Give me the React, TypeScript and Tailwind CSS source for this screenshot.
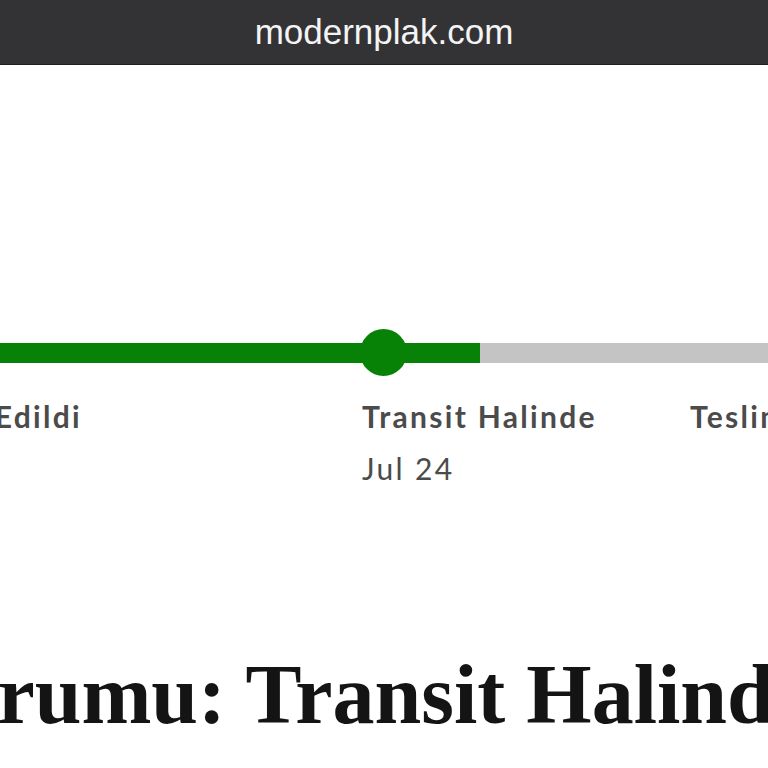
const labelFont = { fontFamily: "Lato, 'Open Sans', sans-serif" };

export default function App() {
  return (
    <div className="h-[768px] w-[768px] overflow-hidden bg-white">
      {/* Browser address bar */}
      <header className="flex h-[65px] items-center justify-center border-b border-[#1f1f21] bg-[#333335]">
        <span
          className="pb-[2px] text-[35px] leading-none text-[#f4f4f4]"
          style={{ fontFamily: "'Liberation Sans', Arial, sans-serif" }}
        >
          modernplak.com
        </span>
      </header>

      {/* Tracking timeline */}
      <section className="pt-[264px]">
        <div className="relative flex h-[47px] items-center">
          <div className="flex h-[20px] w-full">
            <div className="w-[480px] bg-[#078207]" />
            <div className="flex-1 bg-[#c4c4c4]" />
          </div>
          <div className="absolute left-[360px] top-0 h-[47px] w-[47px] rounded-full bg-[#078207]" />
        </div>

        <div
          className="mt-[25px] flex text-[30px] font-bold leading-none tracking-[2.3px] text-[#4b4b4b]"
          style={labelFont}
        >
          <div className="flex w-[82px] shrink-0 justify-end whitespace-nowrap">Sipariş Edildi</div>
          <div className="ml-[280px] w-[328px] shrink-0 whitespace-nowrap">
            <div>Transit Halinde</div>
            <div className="mt-[22px] font-normal">Jul 24</div>
          </div>
          <div className="whitespace-nowrap">Teslim Edildi</div>
        </div>
      </section>

      {/* Status heading */}
      <h1
        className="mt-[170px] whitespace-nowrap text-[84px] font-bold leading-none text-[#141414]"
        style={{ fontFamily: "'Liberation Serif', 'Times New Roman', serif" }}
      >
        <span className="-ml-[110px] inline-block">Durumu: Transit Halinde</span>
      </h1>
    </div>
  );
}
